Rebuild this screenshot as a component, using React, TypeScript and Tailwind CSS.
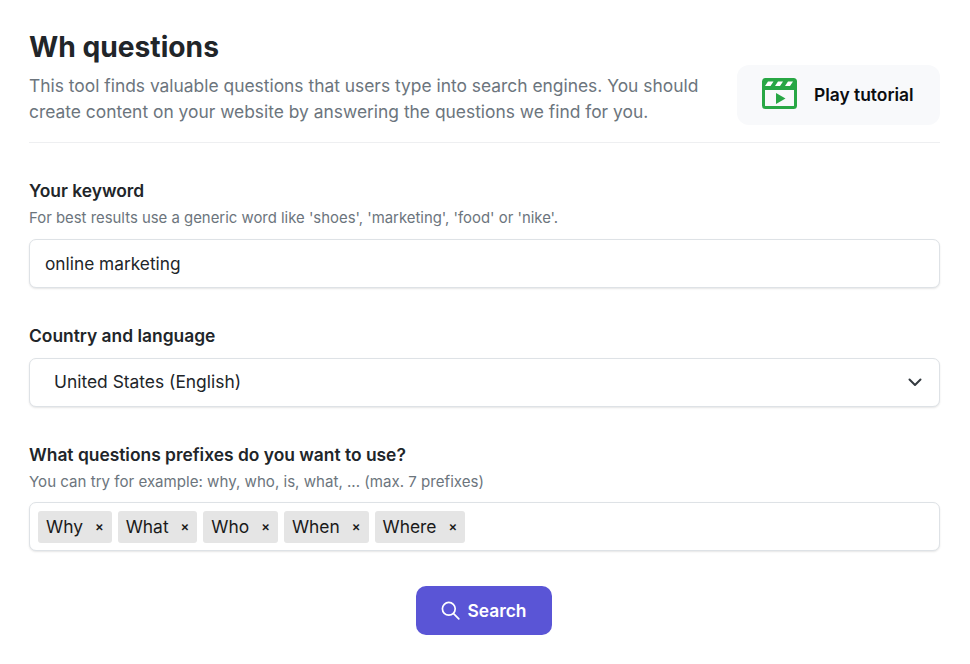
import React from 'react';

const prefixes = ['Why', 'What', 'Who', 'When', 'Where'];

const fieldClass = 'w-full bg-white border border-[#dee2e6] rounded-[7px] shadow-[0_1px_2px_rgba(0,0,0,0.1)] flex items-center';

const App: React.FC = () => {
    return (
        <div className="w-[970px] h-[664px] overflow-hidden bg-white pl-[29px] pr-[30px] pt-[30px] font-['Inter',sans-serif] text-[#212529]">
            {/* Header */}
            <div className="flex items-start justify-between border-b border-[#eeeff1] h-[113px]">
                <div className="w-[690px]">
                    <h1 className="text-[28.2px] leading-[35px] font-bold">Wh questions</h1>
                    <p className="mt-[8px] text-[17.4px] leading-[26px] text-[#6c757d]">
                        This tool finds valuable questions that users type into search engines. You should create content on your website by answering the questions we find for you.
                    </p>
                </div>
                <div className="mt-[35px] w-[203px] h-[60px] rounded-[12px] bg-[#f8f9fb] flex items-center pl-[25px]">
                    <svg width="35" height="31" viewBox="0 0 35 31" fill="none" className="-mt-[3px]">
                        <rect x="1.5" y="1.5" width="32" height="28" rx="2" stroke="#28a745" strokeWidth="3" />
                        <rect x="1.5" y="1.5" width="32" height="10.5" fill="#28a745" />
                        <path d="M3 8 L6 3.5 L11.5 3.5 L8.5 8 Z M13 8 L16 3.5 L21 3.5 L18 8 Z M23 8 L26 3.5 L31 3.5 L28 8 Z" fill="#fff" />
                        <path d="M14 15 L23.5 20.5 L14 26 Z" fill="#28a745" />
                    </svg>
                    <span className="ml-[17px] text-[17.4px] font-semibold text-[#0b0d10]">Play tutorial</span>
                </div>
            </div>

            {/* Keyword */}
            <div className="mt-[35px] text-[17.4px] leading-[26px] font-semibold">Your keyword</div>
            <div className="mt-[2px] text-[14.9px] leading-[24px] text-[#6c757d]">
                For best results use a generic word like 'shoes', 'marketing', 'food' or 'nike'.
            </div>
            <div className={`${fieldClass} mt-[9px] h-[49px] pl-[15px] pt-[1px] text-[17.3px]`}>online marketing</div>

            {/* Country */}
            <div className="mt-[35px] text-[17.4px] leading-[26px] font-semibold">Country and language</div>
            <div className={`${fieldClass} mt-[9px] h-[49px] pl-[24px] pr-[17px] justify-between text-[17.4px]`}>
                <span>United States (English)</span>
                <svg width="14" height="9" viewBox="0 0 14 9" fill="none">
                    <path d="M1.5 1.5 L7 7 L12.5 1.5" stroke="#343a40" strokeWidth="2" strokeLinecap="round" strokeLinejoin="round" />
                </svg>
            </div>

            {/* Prefixes */}
            <div className="mt-[35px] text-[17.4px] leading-[26px] font-semibold">What questions prefixes do you want to use?</div>
            <div className="mt-[2px] text-[15.1px] leading-[24px] text-[#6c757d]">
                You can try for example: why, who, is, what, ... (max. 7 prefixes)
            </div>
            <div className={`${fieldClass} mt-[8px] h-[49px] pl-[8px] gap-[6px]`}>
                {prefixes.map((p) => (
                    <span key={p} className="h-[32px] rounded-[3px] bg-[#e5e5e5] flex items-center px-[8px] text-[17.4px] text-[#1a1a1a]">
                        <span className="pt-[2px]">{p}</span>
                        <span className="ml-[12px] text-[13px] font-semibold">×</span>
                    </span>
                ))}
            </div>

            {/* Submit */}
            <div className="mt-[35px] flex justify-center pr-[1px]">
                <button className="w-[136px] h-[49px] rounded-[10px] bg-[#5a55d6] text-white flex items-center justify-center gap-[7px] pl-[1px] text-[17.4px] font-semibold">
                    <svg width="19" height="19" viewBox="0 0 19 19" fill="none" stroke="#fff" strokeWidth="1.7" strokeLinecap="round" className="-ml-[1px]">
                        <circle cx="7.8" cy="7.8" r="6.4" />
                        <path d="M12.6 12.6 L17.8 17.8" />
                    </svg>
                    <span className="pt-[1px]">Search</span>
                </button>
            </div>
        </div>
    );
};

export default App;
